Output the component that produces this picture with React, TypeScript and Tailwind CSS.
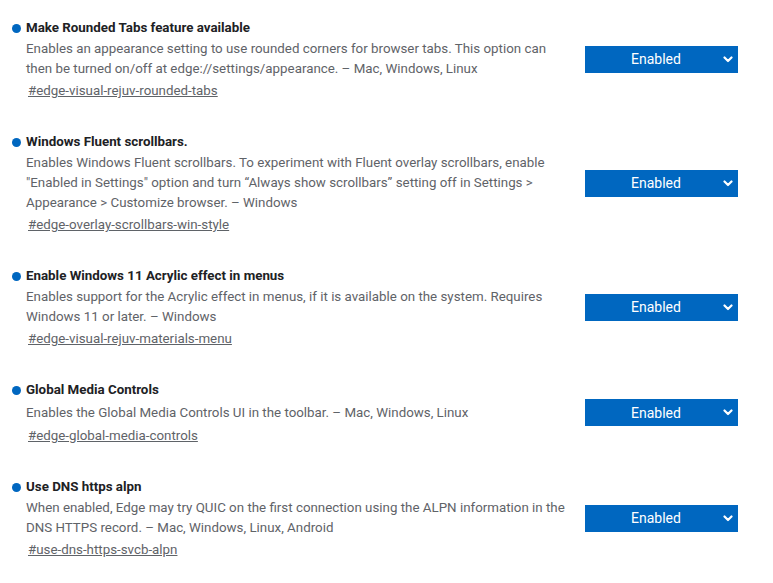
const flags = [
  {
    title: "Make Rounded Tabs feature available",
    desc: "Enables an appearance setting to use rounded corners for browser tabs. This option can then be turned on/off at edge://settings/appearance. – Mac, Windows, Linux",
    tag: "#edge-visual-rejuv-rounded-tabs",
  },
  {
    title: "Windows Fluent scrollbars.",
    desc: "Enables Windows Fluent scrollbars. To experiment with Fluent overlay scrollbars, enable \"Enabled in Settings\" option and turn “Always show scrollbars” setting off in Settings > Appearance > Customize browser. – Windows",
    tag: "#edge-overlay-scrollbars-win-style",
  },
  {
    title: "Enable Windows 11 Acrylic effect in menus",
    desc: "Enables support for the Acrylic effect in menus, if it is available on the system. Requires Windows 11 or later. – Windows",
    tag: "#edge-visual-rejuv-materials-menu",
  },
  {
    title: "Global Media Controls",
    desc: "Enables the Global Media Controls UI in the toolbar. – Mac, Windows, Linux",
    tag: "#edge-global-media-controls",
  },
  {
    title: "Use DNS https alpn",
    desc: "When enabled, Edge may try QUIC on the first connection using the ALPN information in the DNS HTTPS record. – Mac, Windows, Linux, Android",
    tag: "#use-dns-https-svcb-alpn",
  },
];

const Chevron = () => (
  <svg width="10" height="7" viewBox="0 0 10 7" className="shrink-0">
    <path d="M1.5 1.5 L5 5 L8.5 1.5" fill="none" stroke="white" strokeWidth="2.2" strokeLinecap="round" strokeLinejoin="round" />
  </svg>
);

const App = () => {
  return (
    <div className="w-[773px] h-[583px] bg-white overflow-hidden pt-[18px] font-['Roboto',sans-serif] text-[13.33px] leading-[20px]">
      <div className="flex flex-col gap-[31px] w-[738px]">
        {flags.map((f) => (
          <div key={f.tag}>
            {/* title */}
            <div className="flex items-center pl-[12px]">
              <span className="w-[9px] h-[9px] rounded-full bg-[#0067c0] mr-[5px]"></span>
              <h2 className="font-bold text-[#202124]">{f.title}</h2>
            </div>
            <div className="pl-[26px]">
              <div className="flex items-center mt-[1px]">
                <p className="w-[545px] text-[#5f6368]">{f.desc}</p>
                <button className="ml-auto -my-[2px] w-[153px] h-[27px] bg-[#0067c0] text-white text-[14px] flex items-center pl-[4px] pr-[5px]">
                  <span className="flex-1 text-center">Enabled</span>
                  <Chevron />
                </button>
              </div>
              <a className="block mt-[2px] ml-[2px] text-[#5f6368] underline">{f.tag}</a>
            </div>
          </div>
        ))}
      </div>
    </div>
  );
};

export default App;
